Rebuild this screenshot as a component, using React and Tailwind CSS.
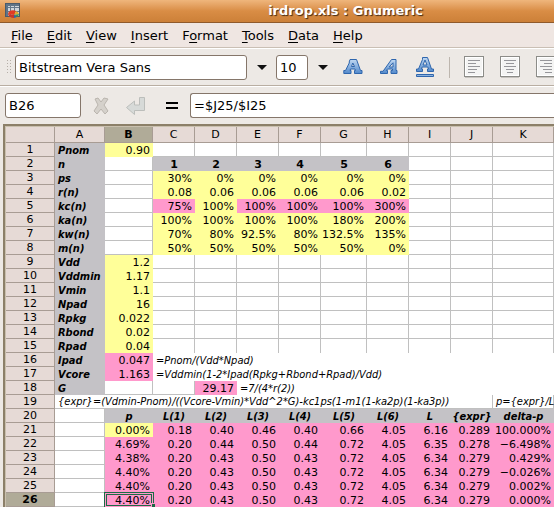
import React from "react";

const FONT = "font-['DejaVu_Sans',sans-serif]";

const MENUS = [
  ["", "F", "ile"],
  ["", "E", "dit"],
  ["", "V", "iew"],
  ["", "I", "nsert"],
  ["F", "o", "rmat"],
  ["", "T", "ools"],
  ["", "D", "ata"],
  ["", "H", "elp"],
];

const COLUMNS = ["A", "B", "C", "D", "E", "F", "G", "H", "I", "J", "K"];

// Cell shorthand, one helper for each kind of cell in the sheet
const y = (t) => ({ t, k: "y" });
const p = (t) => ({ t, k: "p" });
const g = (t) => ({ t, k: "g" });
const gi = (t) => ({ t, k: "gi" });
const l = (t) => ({ t, k: "l" });
const w = () => ({ t: "", k: "w" });
const side = () => ({ t: "", k: "side" });
const note = (t, span) => ({ t, k: "n", span });
const ruled = (t, span) => ({ t, k: "ruled", span });
const blanks = (n) => Array.from({ length: n }, w);

const ROWS = [
  [l("Pnom"), y("0.90"), ...blanks(9)],
  [l("n"), w(), g("1"), g("2"), g("3"), g("4"), g("5"), g("6"), ...blanks(3)],
  [l("ps"), w(), y("30%"), y("0%"), y("0%"), y("0%"), y("0%"), y("0%"), ...blanks(3)],
  [l("r(n)"), w(), y("0.08"), y("0.06"), y("0.06"), y("0.06"), y("0.06"), y("0.02"), ...blanks(3)],
  [l("kc(n)"), w(), p("75%"), y("100%"), p("100%"), p("100%"), p("100%"), p("300%"), ...blanks(3)],
  [l("ka(n)"), w(), y("100%"), y("100%"), y("100%"), y("100%"), y("180%"), y("200%"), ...blanks(3)],
  [l("kw(n)"), w(), y("70%"), y("80%"), y("92.5%"), y("80%"), y("132.5%"), y("135%"), ...blanks(3)],
  [l("m(n)"), w(), y("50%"), y("50%"), y("50%"), y("50%"), y("50%"), y("0%"), ...blanks(3)],
  [l("Vdd"), y("1.2"), ...blanks(9)],
  [l("Vddmin"), y("1.17"), ...blanks(9)],
  [l("Vmin"), y("1.1"), ...blanks(9)],
  [l("Npad"), y("16"), ...blanks(9)],
  [l("Rpkg"), y("0.022"), ...blanks(9)],
  [l("Rbond"), y("0.02"), ...blanks(9)],
  [l("Rpad"), y("0.04"), ...Array.from({ length: 9 }, side)],
  [l("Ipad"), p("0.047"), note("=Pnom/(Vdd*Npad)", 9)],
  [l("Vcore"), p("1.163"), note("=Vddmin(1-2*Ipad(Rpkg+Rbond+Rpad)/Vdd)", 9)],
  [l("G"), w(), w(), p("29.17"), note("=7/(4*r(2))", 7)],
  [ruled("{expr}=(Vdmin-Pnom)/((Vcore-Vmin)*Vdd^2*G)-kc1ps(1-m1(1-ka2p)(1-ka3p))", 10), ruled("p={expr}/L", 1)],
  [w(), ...["p", "L(1)", "L(2)", "L(3)", "L(4)", "L(5)", "L(6)", "L", "{expr}", "delta-p"].map(gi)],
  [w(), y("0.00%"), ...["0.18", "0.40", "0.46", "0.40", "0.66", "4.05", "6.16", "0.289", "100.000%"].map(p)],
  [w(), ...["4.69%", "0.20", "0.44", "0.50", "0.44", "0.72", "4.05", "6.35", "0.278", "−6.498%"].map(p)],
  [w(), ...["4.38%", "0.20", "0.43", "0.50", "0.43", "0.72", "4.05", "6.34", "0.279", "0.429%"].map(p)],
  [w(), ...["4.40%", "0.20", "0.43", "0.50", "0.43", "0.72", "4.05", "6.34", "0.279", "−0.026%"].map(p)],
  [w(), ...["4.40%", "0.20", "0.43", "0.50", "0.43", "0.72", "4.05", "6.34", "0.279", "0.002%"].map(p)],
  [w(), ...["4.40%", "0.20", "0.43", "0.50", "0.43", "0.72", "4.05", "6.34", "0.279", "0.000%"].map(p)],
];

const FILLS = {
  y: "bg-[#ffff99] text-right pr-[3px]",
  p: "bg-[#ff99cc] text-right pr-[3px]",
  g: "bg-[#c4c2c6] text-center font-bold",
  gi: "bg-[#c4c2c6] text-center font-bold italic font-['DejaVu_Sans_Condensed','DejaVu_Sans',sans-serif]",
  l: "bg-[#c4c2c6] text-left pl-[3px] font-bold italic font-['DejaVu_Sans_Condensed','DejaVu_Sans',sans-serif]",
  w: "bg-white border-r border-b border-[#c0c0c0]",
  side: "bg-white border-r border-[#c0c0c0]",
  n: "bg-white text-left pl-[3px] italic font-['DejaVu_Sans_Condensed','DejaVu_Sans',sans-serif]",
  ruled:
    "bg-white border-r border-b border-[#c0c0c0] text-left pl-[3px] italic font-['DejaVu_Sans_Condensed','DejaVu_Sans',sans-serif]",
};

function TitleIcon() {
  return (
    <svg width="16" height="16" viewBox="0 0 16 16" aria-hidden="true">
      <rect x="0.5" y="0.5" width="14" height="13" fill="#cfd5da" stroke="#4b5b6b" />
      <path d="M1 4.5H14M1 8.5H14M5.500 1V13M9.500 1V13" stroke="#65788b" />
      <path d="M1 1h13v2H1zM1 1h2v12H1z" fill="#5f7488" />
      <path d="M3 11a5 4 0 0 1 8-3l-2 4z" fill="#e23b24" />
      <path d="M3 11l6 1v3a6 4 0 0 1-6-4z" fill="#c8372b" />
      <path d="M9 12l2-4a5 4 0 0 1 3 3z" fill="#e3a92b" />
      <path d="M9 12l5-1a5 4 0 0 1-2 3z" fill="#39945a" />
      <path d="M9 12l3 2-3 1z" fill="#2f62b0" />
    </svg>
  );
}

function Caret() {
  return (
    <svg width="10" height="5" viewBox="0 0 10 5" aria-hidden="true">
      <path d="M0 0h10L5 5z" fill="#111" />
    </svg>
  );
}

function LetterIcon({ variant }) {
  return (
    <svg width="20" height="22" viewBox="0 0 20 22" aria-hidden="true">
      <defs>
        <linearGradient id={"ink-" + variant} x1="0" y1="0" x2="0" y2="1">
          <stop offset="0" stopColor="#c0d8f2" />
          <stop offset="1" stopColor="#5289cb" />
        </linearGradient>
      </defs>
      <g fill={"url(#ink-" + variant + ")"} stroke="#2f66ad" strokeWidth="1" fillRule="evenodd" strokeLinejoin="round">
        {variant === "bold" && (
          <path d="M7 3.500h6.500l4 11h1.500v3h-7.500v-3h1l-.5-1.500h-4.500L7 14.500h1v3H.8v-3h1.700l4-8H6zM9.800 7L8.500 10.500h3z" />
        )}
        {variant === "italic" && (
          <path d="M12.500 3.500H17v11h1v3h-6v-3h1.500V13H8.500l-1.200 1.500h1.200v3H1.500v-2.200H4zM14 6.800L10.200 11H14z" />
        )}
        {variant === "underline" && (
          <>
            <path d="M7.500 1.500h5l4 11.500h2v2.500h-6V13h1l-.7-2H7.200L6.500 13h1v2.500h-6V13h2L7.500 3.500zM10 4L8 9h4z" />
            <path d="M1.500 18.500h17v2h-17z" />
          </>
        )}
      </g>
    </svg>
  );
}

const LINES = {
  left: "M4 4.500h12M4 7.500h8M4 10.500h12M4 13.500h9M4 16.500h7",
  center: "M4 4.500h12M6 7.500h8M4 10.500h12M6 13.500h8M7 16.500h6",
  right: "M4 4.500h12M8 7.500h8M4 10.500h12M7 13.500h9M9 16.500h7",
};

function AlignIcon({ align }) {
  return (
    <svg width="20" height="22" viewBox="0 0 20 22" aria-hidden="true">
      <path d="M1 21.500h18" stroke="#c6c3be" />
      <rect x="0.500" y="0.500" width="19" height="20" fill="#f4f4f3" stroke="#8c8c88" />
      <rect x="1.500" y="1.500" width="17" height="18" fill="none" stroke="#fff" />
      <path d={LINES[align]} stroke="#96969a" />
    </svg>
  );
}

function CancelIcon() {
  return (
    <svg width="16" height="18" viewBox="0 0 16 18" aria-hidden="true">
      <path
        d="M2 2l3-1 3 4 3-4 4 1-4 6 4 6-3 3-4-5-4 5-3-3 4-6z"
        fill="#d5d1cb"
        stroke="#bab5ae"
        strokeLinejoin="round"
      />
    </svg>
  );
}

function EnterIcon() {
  return (
    <svg width="21" height="20" viewBox="0 0 21 20" aria-hidden="true">
      <path
        d="M14.500 1.500h5v13H9.500v4l-8-7 8-6.500v4h5z"
        fill="#d7dad8"
        stroke="#bcbebb"
        strokeLinejoin="round"
      />
    </svg>
  );
}

const FIELD = "rounded-[3px] border border-[#85766a] bg-white text-[13px] text-black outline-none";

export default function App() {
  return (
    <div className={`min-h-screen w-full overflow-hidden bg-[#ede9e5] text-black ${FONT}`}>
      <header className="flex h-[23px] items-center border-b border-[#8f5a2b] bg-linear-to-b from-[#efb67c] via-[#d98d45] to-[#cc8038] pl-[5px]">
        <TitleIcon />
        <h1 className="flex-1 pl-[132px] pr-4 text-center text-[13px] leading-4 font-bold whitespace-nowrap text-white [text-shadow:1px_1px_1px_#432a14]">
          irdrop.xls : Gnumeric
        </h1>
      </header>

      <nav className="flex h-[25px] items-center gap-[14px] border-b border-[#cabfb4] bg-[#efe6e2] pt-px pl-[11px] text-[13px]">
        {MENUS.map(([before, key, after]) => (
          <button key={key + after} type="button" className="leading-4">
            {before}
            <span className="underline underline-offset-2">{key}</span>
            {after}
          </button>
        ))}
      </nav>

      <div className="flex h-[38px] items-center overflow-hidden border-t border-b border-t-white border-b-[#b9aea2] pl-[6px]">
        <div className="h-4 w-[5px] shrink-0 bg-[radial-gradient(#b5aea6_1px,transparent_1px)] bg-size-[3px_3px]" />
        <input
          aria-label="Font"
          defaultValue="Bitstream Vera Sans"
          className={`${FIELD} ml-1 h-[25px] w-[232px] shrink-0 px-[3px]`}
        />
        <button type="button" aria-label="Choose font" className="ml-[10px] shrink-0">
          <Caret />
        </button>
        <input aria-label="Font size" defaultValue="10" className={`${FIELD} ml-[9px] h-[25px] w-8 shrink-0 px-[3px]`} />
        <button type="button" aria-label="Choose font size" className="ml-[10px] shrink-0">
          <Caret />
        </button>
        <div className="ml-[15px] flex shrink-0 gap-4">
          <button type="button" aria-label="Bold"><LetterIcon variant="bold" /></button>
          <button type="button" aria-label="Italic"><LetterIcon variant="italic" /></button>
          <button type="button" aria-label="Underline"><LetterIcon variant="underline" /></button>
        </div>
        <div className="ml-[14px] h-[21px] w-px shrink-0 bg-[#bdb6ae]" />
        <div className="ml-[14px] flex shrink-0 gap-4">
          <button type="button" aria-label="Align left"><AlignIcon align="left" /></button>
          <button type="button" aria-label="Align center"><AlignIcon align="center" /></button>
          <button type="button" aria-label="Align right"><AlignIcon align="right" /></button>
        </div>
      </div>

      <div className="flex h-[38px] items-center border-t border-white pl-[5px]">
        <input aria-label="Cell" defaultValue="B26" className={`${FIELD} h-[25px] w-[76px] shrink-0 px-[3px]`} />
        <button type="button" aria-label="Cancel" className="ml-3 shrink-0"><CancelIcon /></button>
        <button type="button" aria-label="Accept" className="ml-4 shrink-0"><EnterIcon /></button>
        <button type="button" aria-label="Insert formula" className="ml-[19px] shrink-0">
          <svg width="14" height="8" viewBox="0 0 14 8" aria-hidden="true">
            <path d="M1 1h12M1 6h12" stroke="#000" strokeWidth="2" />
          </svg>
        </button>
        <input
          aria-label="Formula"
          defaultValue="=$J25/$I25"
          className={`${FIELD} ml-[11px] h-[25px] min-w-0 flex-1 rounded-r-none border-r-0 px-[3px]`}
        />
      </div>

      <main className="ml-[3px] border-t-2 border-l-2 border-[#8c8069] bg-white">
        <table className="w-full table-fixed border-separate border-spacing-0 border-t border-l border-[#c9c0ae] text-[11px] leading-[13px]">
          <colgroup>
            <col className="w-[49px]" />
            <col className="w-[50px]" />
            <col className="w-[48px]" />
            <col className="w-[42px]" />
            <col className="w-[42px]" />
            <col className="w-[42px]" />
            <col className="w-[42px]" />
            <col className="w-[46px]" />
            <col className="w-[42px]" />
            <col className="w-[42px]" />
            <col className="w-[42px]" />
            <col />
          </colgroup>
          <thead>
            <tr className="h-4">
              <th className="border-r border-b border-[#a89c94] bg-[#e6dad6] p-0" />
              {COLUMNS.map((c) => (
                <th
                  key={c}
                  scope="col"
                  className={`border-r border-b border-[#a89c94] p-0 ${c === "B" ? "bg-[#b0ab98] font-bold" : "bg-[#e6dad6] font-normal"}`}
                >
                  {c}
                </th>
              ))}
            </tr>
          </thead>
          <tbody>
            {ROWS.map((cells, i) => (
              <tr key={i} className="h-[14px]">
                <th
                  scope="row"
                  className={`border-r border-b border-[#a89c94] p-0 text-center ${i === 25 ? "bg-[#b0ab98] font-bold" : "bg-[#e6dad6] font-normal"}`}
                >
                  {i + 1}
                </th>
                {cells.map((c, j) => {
                  const selected = i === 25 && j === 1;
                  return (
                    <td
                      key={j}
                      colSpan={c.span || 1}
                      className={`p-0 whitespace-nowrap ${FILLS[c.k]} ${selected ? "relative outline-3 -outline-offset-2 outline-[#1c6b45] outline-double" : ""}`}
                    >
                      {c.t}
                      {selected && (
                        <span className="absolute -right-0.5 bottom-0 size-1 border-t border-l border-[#ff99cc] bg-[#1c6b45]" />
                      )}
                    </td>
                  );
                })}
              </tr>
            ))}
          </tbody>
        </table>
      </main>
    </div>
  );
}
